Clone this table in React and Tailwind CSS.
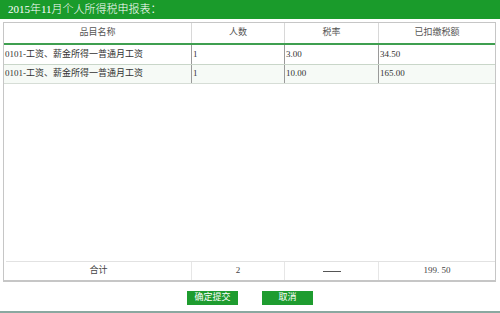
import React from "react";

const F = { fontFamily: '"Liberation Serif", "Noto Sans CJK SC", serif' };

function Row({ cells, className, divider, first = "w-[188px]" }) {
  return (
    <div className={`flex ${className}`}>
      {cells.map((c, i) => (
        <div
          key={i}
          className={`${i === 0 ? first : i === 1 ? "w-[93px]" : i === 2 ? "w-[94px]" : "flex-1"} ${i < 3 ? `border-r ${divider}` : ""} flex items-center ${c.center ? "justify-center" : "pl-[1px]"}`}
        >
          {c.t}
        </div>
      ))}
    </div>
  );
}

export default function App() {
  return (
    <div className="w-[500px] h-[313px] bg-white flex flex-col border-b-2 border-[#8aa8a0] text-[9px] text-[#333]" style={F}>
      <div className="h-[19px] bg-[#1a9b2b] text-white text-[11px] leading-[19px] pl-[8px] shrink-0 font-light">
        2015年11月个人所得税申报表：
      </div>
      <div className="mt-[3px] ml-[3px] mr-[4px] h-[260px] border border-b-2 border-[#c6c6c6] flex flex-col">
        <Row
          className="h-[22px] border-b-2 border-[#3f9f50] text-[#555]"
          divider="border-[#d8d8d8]"
          cells={[
            { t: "品目名称", center: true },
            { t: "人数", center: true },
            { t: "税率", center: true },
            { t: "已扣缴税额", center: true },
          ]}
        />
        <Row
          className="h-[20px] border-b border-[#c9d6c9]"
          divider="border-[#9a9a9a]"
          cells={[
            { t: "0101-工资、薪金所得一普通月工资" },
            { t: "1" },
            { t: "3.00" },
            { t: "34.50" },
          ]}
        />
        <Row
          className="h-[19px] border-b border-[#d6ddd6] bg-[#f6faf6]"
          divider="border-[#9a9a9a]"
          cells={[
            { t: "0101-工资、薪金所得一普通月工资" },
            { t: "1" },
            { t: "10.00" },
            { t: "165.00" },
          ]}
        />
        <div className="flex-1" />
        <div className="ml-[2px]">
          <Row
            className="h-[19px] border-t border-[#e2e2e2] text-[#444]"
            divider="border-[#e6e6e6]"
            first="w-[186px]"
            cells={[
              { t: "合计", center: true },
              { t: "2", center: true },
              { t: <span className="block w-[18px] h-px bg-[#555]" />, center: true },
              { t: "199. 50", center: true },
            ]}
          />
        </div>
      </div>
      <div className="flex justify-center gap-[24px] mt-[9px]">
        <div className="w-[51px] h-[14px] bg-[#1e9c2f] text-white text-[9px] flex items-center justify-center">确定提交</div>
        <div className="w-[51px] h-[14px] bg-[#1e9c2f] text-white text-[9px] flex items-center justify-center">取消</div>
      </div>
    </div>
  );
}
